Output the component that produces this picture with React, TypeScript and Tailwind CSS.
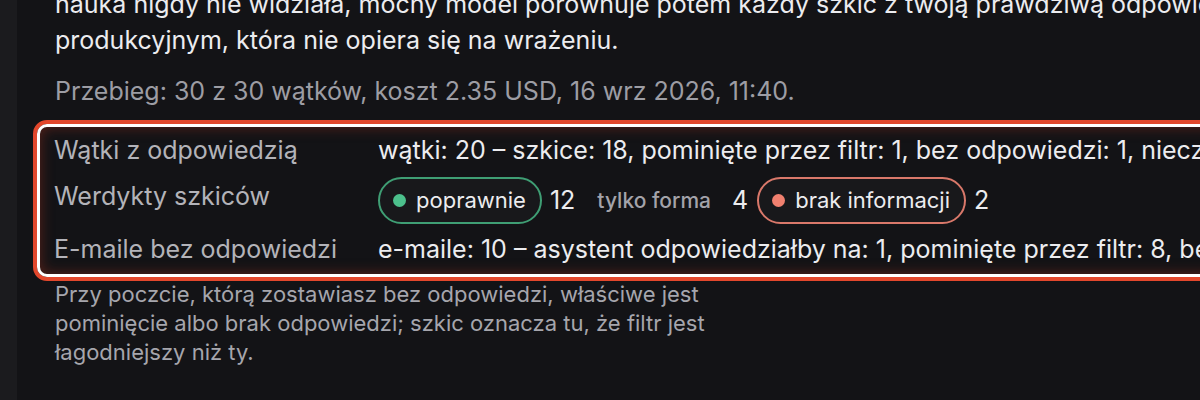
import * as React from "react";

type Verdict = {
  label: string;
  count: number;
  tone: "good" | "plain" | "bad";
};

const VERDICTS: Verdict[] = [
  { label: "poprawnie", count: 12, tone: "good" },
  { label: "tylko forma", count: 4, tone: "plain" },
  { label: "brak informacji", count: 2, tone: "bad" },
];

function VerdictChip({ v }: { v: Verdict }) {
  if (v.tone === "plain") {
    return (
      <div className="flex items-center">
        <span className="ml-[13px] text-[21px] font-medium text-[#a3a3aa]">{v.label}</span>
        <span className="ml-[21px] text-[25px]">{v.count}</span>
      </div>
    );
  }
  const good = v.tone === "good";
  return (
    <div className="flex items-center">
      <span
        className={
          good
            ? "flex h-[47px] items-center gap-[10px] rounded-full border-2 border-[#3f9e74] bg-[#18181b] pl-[13px] pr-[14px]"
            : "flex h-[47px] items-center gap-[10px] rounded-full border-2 border-[#d9786a] bg-[#18181b] pl-[13px] pr-[14px]"
        }
      >
        <span
          className={
            good
              ? "size-[13px] rounded-full bg-[#4cc08c]"
              : "size-[13px] rounded-full bg-[#f0806f]"
          }
        />
        <span className="text-[22px]">{v.label}</span>
      </span>
      <span className="ml-[8px] text-[25px]">{v.count}</span>
    </div>
  );
}

export default function App() {
  return (
    <div className="flex h-[400px] w-full overflow-hidden bg-[#131316] font-['Inter',sans-serif] text-[#ececef]">
      <aside className="w-[17px] shrink-0 bg-[#1b1b1e]" />
      <main className="min-w-0 flex-1 pl-[38px]">
        <p className="-mt-[14px] whitespace-nowrap text-[25px] leading-[36px]">
          nauka nigdy nie widziała, mocny model porównuje potem każdy szkic z twoją prawdziwą odpowiedzią
          w środowisku
          <br />
          produkcyjnym, która nie opiera się na wrażeniu.
        </p>
        <p className="mt-[15px] whitespace-nowrap text-[25px] leading-[36px] text-[#9d9da4]">
          Przebieg: 30 z 30 wątków, koszt 2.35 USD, 16 wrz 2026, 11:40.
        </p>

        <div className="-ml-[22px] mt-[11px] w-[1300px] rounded-[14px] border-4 border-[#e2472c]">
          <div className="grid grid-cols-[324px_1fr] gap-y-[10px] whitespace-nowrap rounded-[10px] border-[3px] border-white px-[14px] pb-[8px] pt-[8px] shadow-[inset_0_0_14px_rgba(150,45,30,0.55)]">
            <div className="flex h-[32px] items-center text-[25px] text-[#b3b3b9]">Wątki z odpowiedzią</div>
            <div className="flex h-[32px] items-center text-[25px]">
              wątki: 20 – szkice: 18, pominięte przez filtr: 1, bez odpowiedzi: 1, nieczytelne: 0
            </div>

            <div className="flex h-[47px] items-start pt-[1px] text-[25px] text-[#b3b3b9]">Werdykty szkiców</div>
            <div className="flex h-[47px] items-center gap-[9px]">
              {VERDICTS.map((v) => (
                <VerdictChip key={v.label} v={v} />
              ))}
            </div>

            <div className="flex h-[32px] items-center text-[25px] text-[#b3b3b9]">E-maile bez odpowiedzi</div>
            <div className="flex h-[32px] items-center text-[25px]">
              e-maile: 10 – asystent odpowiedziałby na: 1, pominięte przez filtr: 8, bez odpowiedzi: 1
            </div>
          </div>
        </div>

        <p className="-mt-px w-[660px] text-[22px] leading-[29px] text-[#a6a6ad]">
          Przy poczcie, którą zostawiasz bez odpowiedzi, właściwe jest pominięcie albo brak odpowiedzi; szkic
          oznacza tu, że filtr jest łagodniejszy niż ty.
        </p>
      </main>
    </div>
  );
}
